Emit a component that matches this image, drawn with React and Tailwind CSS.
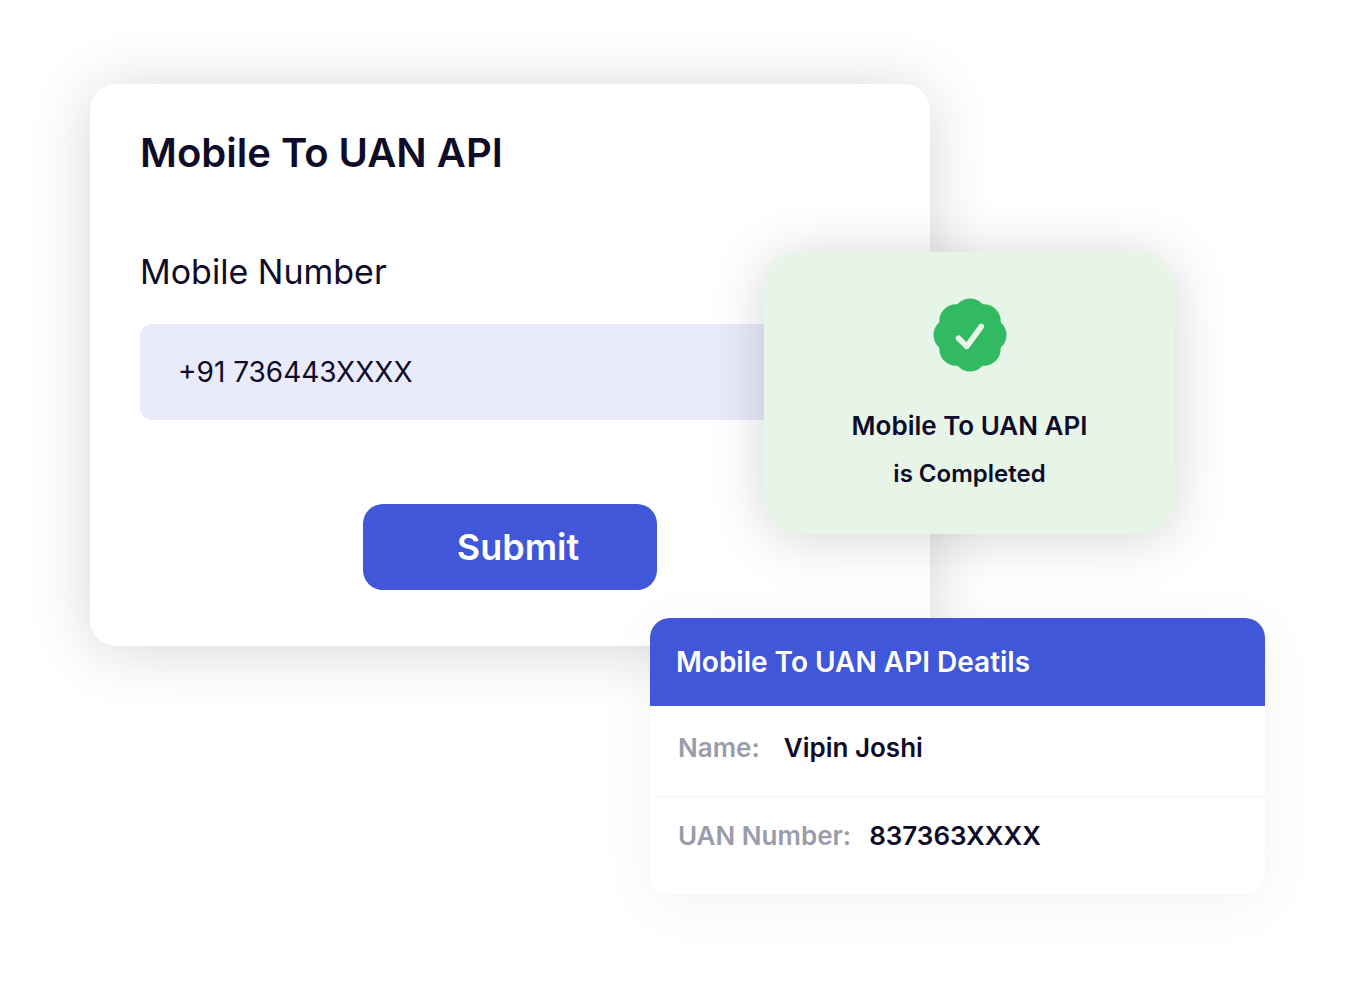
import React from 'react';

const LOBE_ANGLES = [0, 45, 90, 135, 180, 225, 270, 315];

const DETAILS = [
  { label: 'Name:', value: 'Vipin Joshi', spacing: 'gap-6 pt-5 pb-[26px]' },
  { label: 'UAN Number:', value: '837363XXXX', spacing: 'gap-[18px] pt-4 pb-9' },
];

function VerifiedBadge() {
  return (
    <svg className="w-[74px] h-[74px]" viewBox="-37 -37 74 74" aria-hidden="true">
      <g fill="#32ba63">
        <circle r="24" />
        {LOBE_ANGLES.map((angle) => (
          <circle key={angle} cx="19.8" r="16.7" transform={`rotate(${angle})`} />
        ))}
      </g>
      <path
        d="M-11.5 3.2 L-3.2 11.4 L11.3 -8.5"
        fill="none"
        stroke="#e7f5e9"
        strokeWidth="5.6"
        strokeLinecap="round"
        strokeLinejoin="round"
      />
    </svg>
  );
}

function MobileForm() {
  return (
    <form
      onSubmit={(e) => e.preventDefault()}
      className="flex flex-col rounded-[26px] bg-white px-[50px] pt-11 pb-14 shadow-[0_4px_64px_rgba(0,0,0,0.16)]"
    >
      <h1 className="text-[40px] leading-[50px] font-semibold">Mobile To UAN API</h1>
      <label htmlFor="mobile" className="mt-[72px] text-[34px] leading-11">
        Mobile Number
      </label>
      <input
        id="mobile"
        type="text"
        defaultValue="+91 736443XXXX"
        className="mt-[30px] h-24 w-full rounded-xl bg-[#e9eafa] px-[38px] text-[28px] outline-none"
      />
      <button
        type="submit"
        className="mt-[84px] h-[86px] w-[294px] self-center rounded-[20px] bg-[#3f57d8] pl-4 text-4xl font-semibold text-white"
      >
        Submit
      </button>
    </form>
  );
}

function SuccessCard() {
  return (
    <div
      role="status"
      className="absolute top-[168px] left-[674px] flex w-[411px] flex-col items-center rounded-[36px] bg-[#e7f5e9] pt-[46px] pb-9 shadow-[0_4px_56px_rgba(0,0,0,0.17)]"
    >
      <VerifiedBadge />
      <p className="mt-[30px] text-[26px] leading-12 font-semibold">Mobile To UAN API</p>
      <p className="text-2xl leading-12 font-semibold">is Completed</p>
    </div>
  );
}

function DetailsCard() {
  return (
    <section className="relative -mt-7 ml-auto w-full max-w-[615px] overflow-hidden rounded-[20px] bg-white shadow-[0_10px_60px_rgba(0,0,0,0.05)]">
      <h2 className="bg-[#3f57d8] px-[26px] text-[28px] leading-[88px] font-semibold text-white">
        Mobile To UAN API Deatils
      </h2>
      <dl className="divide-y-2 divide-[#f8fafb] text-[26px]">
        {DETAILS.map(({ label, value, spacing }) => (
          <div key={label} className={`flex px-7 leading-11 ${spacing}`}>
            <dt className="font-semibold text-[#9b9cab]">{label}</dt>
            <dd className="font-semibold">{value}</dd>
          </div>
        ))}
      </dl>
    </section>
  );
}

export default function App() {
  return (
    <main className="min-h-screen bg-white px-[90px] pt-[84px] pb-24 font-[Inter,sans-serif] text-[#0f0c29]">
      <div className="relative max-w-[840px]">
        <MobileForm />
        <SuccessCard />
      </div>
      <DetailsCard />
    </main>
  );
}
